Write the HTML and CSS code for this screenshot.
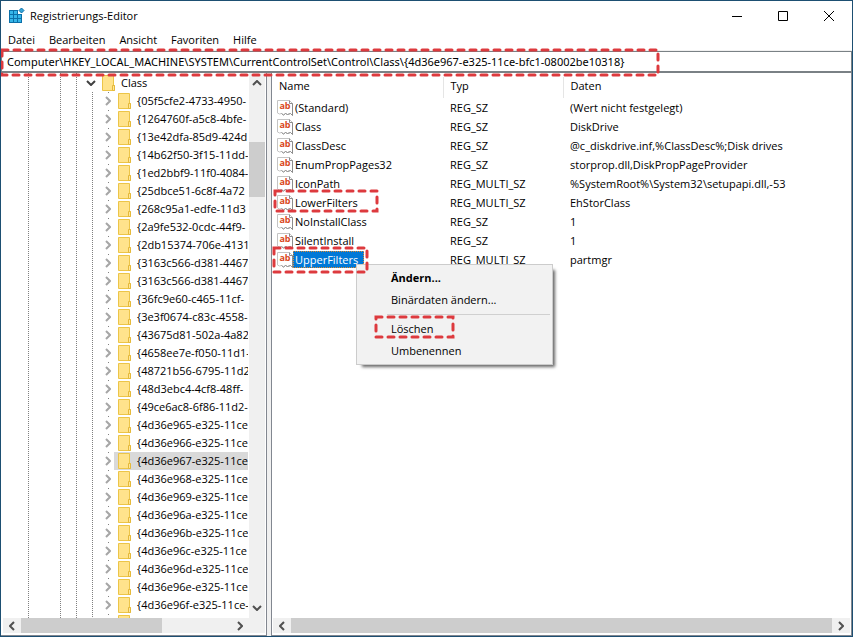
FILE: index.html
```
<!DOCTYPE html>
<html lang="de">
<head>
  <meta charset="utf-8">
  <title>Registrierungs-Editor</title>
  <link rel="stylesheet" href="styles.css">
</head>
<body>
  <svg class="sprite" aria-hidden="true">
    <symbol id="folder" viewBox="0 0 14 16">
      <path d="M.5 .5h11v10h1v5H.5z" fill="#ffe38c" stroke="#ecc548"/>
      <path d="M10.500 15.500v-5h2v5z" fill="#ffe79a" stroke="#e5b93a"/>
    </symbol>
    <symbol id="right" viewBox="0 0 6 10"><path d="M1 1l4 4-4 4" fill="none" stroke="currentColor" stroke-width="2"/></symbol>
    <symbol id="left" viewBox="0 0 6 10"><path d="M5 1L1 5l4 4" fill="none" stroke="currentColor" stroke-width="2"/></symbol>
    <symbol id="up" viewBox="0 0 10 6"><path d="M1 5l4-4 4 4" fill="none" stroke="currentColor" stroke-width="2"/></symbol>
    <symbol id="down" viewBox="0 0 10 6"><path d="M1 1l4 4 4-4" fill="none" stroke="currentColor" stroke-width="2"/></symbol>
    <symbol id="page" viewBox="0 0 16 16">
      <path d="M.5 .5h12l3 3v12l-2-2-3 1-2-1-2 1.500-2-1.500-2 .5-2-1z" fill="#fff" stroke="#c4c4c4"/>
      <path d="M12.500 .5v3h3v12l-2-2-3 1-2-1-2 1.500-2-1.500" fill="none" stroke="#8c8c8c"/>
    </symbol>
  </svg>

  <div class="window">
    <header class="titlebar">
      <svg class="logo" viewBox="0 0 16 16">
        <path d="M0 2h9v4h4v9H0z" fill="#0b6fa8"/>
        <path d="M1 3h3v3H1zM5 3h3v3H5zM1 7h3v3H1zM5 7h3v3H5zM9 7h3v3H9zM1 11h3v3H1zM5 11h3v3H5zM9 11h3v3H9z" fill="#35b5e8"/>
        <path d="M12.500 0l2.500 2.500-2.500 2.500L10 2.500z" fill="#35a5d8" stroke="#0b6fa8"/>
      </svg>
      <span class="title">Registrierungs-Editor</span>
      <button class="win-btn" aria-label="Minimieren"><svg viewBox="0 0 12 12"><path d="M1 6.500h10"/></svg></button>
      <button class="win-btn" aria-label="Maximieren"><svg viewBox="0 0 12 12"><path d="M1.500 1.500h9v9h-9z"/></svg></button>
      <button class="win-btn" aria-label="Schließen"><svg viewBox="0 0 12 12"><path d="M1 1l10 10M11 1L1 11"/></svg></button>
    </header>

    <nav class="menubar">
      <a href="#">Datei</a>
      <a href="#">Bearbeiten</a>
      <a href="#">Ansicht</a>
      <a href="#">Favoriten</a>
      <a href="#">Hilfe</a>
    </nav>

    <input class="address" type="text" aria-label="Pfad" value="Computer\HKEY_LOCAL_MACHINE\SYSTEM\CurrentControlSet\Control\Class\{4d36e967-e325-11ce-bfc1-08002be10318}">

    <main class="panes">
      <section class="pane tree-pane">
        <div class="tree-area">
          <div class="tree">
            <div class="guides"><i></i><i></i><i></i></div>
            <div class="branch">
              <div class="root"><svg class="open"><use href="#down"/></svg><svg class="folder"><use href="#folder"/></svg><span>Class</span></div>
              <ul class="keys" id="keys"></ul>
            </div>
          </div>
          <div class="scroll vertical">
            <button aria-label="Nach oben"><svg class="v"><use href="#up"/></svg></button>
            <div class="track"><div class="thumb"></div></div>
            <button aria-label="Nach unten"><svg class="v"><use href="#down"/></svg></button>
          </div>
        </div>
        <div class="scroll horizontal tree-scroll">
          <button aria-label="Nach links"><svg class="h"><use href="#left"/></svg></button>
          <div class="track"><div class="thumb"></div></div>
          <button aria-label="Nach rechts"><svg class="h"><use href="#right"/></svg></button>
        </div>
      </section>

      <section class="pane list-pane">
        <div class="list-area">
          <table class="values">
            <thead>
              <tr><th class="col-name">Name</th><th class="col-type">Typ</th><th>Daten</th></tr>
            </thead>
            <tbody id="values"></tbody>
          </table>
        </div>
        <div class="scroll horizontal">
          <button aria-label="Nach links"><svg class="h"><use href="#left"/></svg></button>
          <div class="track"><div class="thumb"></div></div>
          <button aria-label="Nach rechts"><svg class="h"><use href="#right"/></svg></button>
        </div>
      </section>
    </main>

    <div class="context-menu">
      <button class="default">Ändern...</button>
      <button>Binärdaten ändern...</button>
      <hr>
      <button>Löschen</button>
      <button>Umbenennen</button>
    </div>

    <svg class="mark mark-path"><rect/></svg>
    <svg class="mark mark-lower"><rect/></svg>
    <svg class="mark mark-upper"><rect/></svg>
    <svg class="mark mark-delete"><rect/></svg>
  </div>

  <script src="script.js"></script>
</body>
</html>
```

FILE: styles.css
```
* {
  box-sizing: border-box;
}
body {
  margin: 0;
  font-family: "Open Sans", "Noto Sans", sans-serif;
  font-size: 11px;
  color: #000;
}
button {
  padding: 0;
  border: none;
  background: none;
  font: inherit;
  color: inherit;
}
.sprite {
  display: none;
}
.window {
  position: relative;
  display: flex;
  flex-direction: column;
  height: 100vh;
  border: 1px solid #1d4f72;
  background: #fff;
  overflow: hidden;
}

/* title bar and menu */
.titlebar {
  display: flex;
  align-items: center;
  height: 30px;
  padding-left: 8px;
}
.logo {
  width: 16px;
  height: 16px;
}
.title {
  flex: 1;
  padding: 0 0 2px 5px;
}
.win-btn {
  display: flex;
  align-items: center;
  justify-content: center;
  width: 46px;
  height: 30px;
}
.win-btn svg {
  width: 12px;
  height: 12px;
  fill: none;
  stroke: #000;
}
.menubar {
  display: flex;
  align-items: center;
  gap: 14px;
  height: 20px;
  padding: 0 0 2px 7px;
  border-bottom: 1px solid #f0f0f0;
}
.menubar a {
  color: #000;
  text-decoration: none;
}
.address {
  height: 22px;
  padding: 0 5px;
  border: 1px solid #7a8185;
  border-bottom-width: 2px;
  font-family: "Noto Sans", sans-serif;
  font-size: 11px;
  color: #000;
  outline: none;
}

/* panes */
.panes {
  display: flex;
  flex: 1;
  gap: 4px;
  min-height: 0;
  background: #f0f0f0;
}
.pane {
  display: flex;
  flex-direction: column;
  padding: 0 1px 2px;
  border: 1px solid #828790;
  border-top: none;
  background: #fff;
}
.tree-pane {
  width: 266px;
  border-left: none;
}
.list-pane {
  flex: 1;
}
.tree-area {
  display: flex;
  flex: 1;
  min-height: 0;
}
.tree {
  display: flex;
  flex: 1;
  min-width: 0;
  margin-right: 1px;
  overflow: hidden;
}
.guides {
  display: flex;
  flex: none;
  width: 84px;
  padding-left: 26px;
}
.guides i,
.keys {
  background: repeating-linear-gradient(#808080 0 1px, transparent 1px 2px) 0 0 / 1px 100% no-repeat;
}
.guides i {
  flex: none;
  width: 16px;
}
.guides i:first-child {
  width: 32px;
}
.guides i:last-child {
  width: 10px;
}
.branch {
  flex: 1;
  min-width: 0;
  padding-top: 1px;
}
.root,
.keys li {
  display: flex;
  align-items: center;
  height: 18px;
  white-space: nowrap;
}
.keys li {
  background: linear-gradient(#808080, #808080) 3px 0 / 1px 1px no-repeat;
}
.root span,
.keys span {
  padding: 0 0 2px 5px;
}
.open {
  width: 10px;
  height: 6px;
  margin-right: 6px;
  color: #404040;
}
.keys {
  margin: 0 0 0 6px;
  padding: 0 0 0 13px;
  list-style: none;
}
.toggle {
  flex: none;
  width: 6px;
  height: 10px;
  color: #a6a6a6;
}
.folder {
  flex: none;
  width: 14px;
  height: 16px;
}
.entry {
  display: flex;
  flex: 1;
  align-items: center;
  min-width: 0;
  height: 18px;
  margin-left: 3px;
  padding-left: 4px;
}
.selected .entry {
  background: #d9d9d9;
}

/* scrollbars */
.scroll {
  display: flex;
  background: #f0f0f0;
  color: #505050;
}
.scroll button {
  display: flex;
  align-items: center;
  justify-content: center;
}
.scroll .track {
  display: flex;
  flex: 1;
}
.scroll .thumb {
  background: #cdcdcd;
}
.vertical {
  flex-direction: column;
  width: 16px;
}
.vertical button {
  height: 20px;
}
.vertical .track {
  flex-direction: column;
  padding-top: 49px;
}
.vertical .thumb {
  height: 55px;
}
.horizontal {
  height: 15px;
}
.horizontal button {
  width: 18px;
}
.horizontal .thumb {
  width: 100%;
}
.tree-scroll {
  margin-left: 1px;
  padding-right: 16px;
}
.tree-scroll .thumb {
  width: 67%;
}
.v {
  width: 10px;
  height: 6px;
}
.h {
  width: 6px;
  height: 10px;
}

/* value list */
.list-area {
  flex: 1;
  min-height: 0;
  padding-top: 4px;
  overflow: hidden;
}
.values {
  width: 100%;
  border-collapse: collapse;
  table-layout: fixed;
}
.values th {
  height: 21px;
  padding: 0 7px 4px;
  border-left: 1px solid #e5e5e5;
  font-weight: normal;
  text-align: left;
}
.values .col-name {
  width: 170px;
  padding-left: 6px;
  border-left: none;
}
.col-type {
  width: 120px;
}
.values td {
  height: 19px;
  padding: 0 7px;
  white-space: nowrap;
}
.values td:first-child {
  padding-left: 4px;
}
.value {
  display: flex;
  align-items: center;
}
.icon {
  display: grid;
  width: 16px;
  height: 16px;
}
.icon svg,
.icon b {
  grid-area: 1 / 1;
  width: 16px;
  height: 16px;
}
.icon b {
  color: #d9481c;
  font-size: 9px;
  line-height: 12px;
  text-align: center;
}
.value span {
  padding: 1px 6px 1px 2px;
}
.active span {
  background: #0078d7;
  color: #fff;
  outline: 1px dotted #e08a30;
  outline-offset: -1px;
}

/* context menu */
.context-menu {
  position: absolute;
  left: 355px;
  top: 263px;
  width: 197px;
  padding: 2px;
  border: 1px solid #ccc;
  background: #f2f2f2;
  box-shadow: 4px 4px 3px -2px rgba(0, 0, 0, 0.6);
}
.context-menu button {
  display: block;
  width: 100%;
  height: 22px;
  padding: 0 0 2px 32px;
  text-align: left;
}
.context-menu .default {
  font-weight: bold;
}
.context-menu hr {
  margin: 3px 0 3px 28px;
  border: none;
  border-top: 1px solid #d0d0d0;
}

/* highlight frames */
.mark {
  position: absolute;
  overflow: visible;
  pointer-events: none;
}
.mark rect {
  width: 100%;
  height: 100%;
  fill: none;
  stroke: #dd3a3e;
  stroke-width: 3px;
  stroke-dasharray: 6 6;
  stroke-linecap: round;
}
.mark-path {
  left: 1px;
  top: 49px;
  width: 656px;
  height: 25px;
}
.mark-lower {
  left: 274px;
  top: 190px;
  width: 102px;
  height: 20px;
}
.mark-upper {
  left: 273px;
  top: 247px;
  width: 93px;
  height: 24px;
}
.mark-delete {
  left: 375px;
  top: 316px;
  width: 77px;
  height: 20px;
}
```

FILE: script.js
```
const keys = [
  '{05f5cfe2-4733-4950-', '{1264760f-a5c8-4bfe-', '{13e42dfa-85d9-424d', '{14b62f50-3f15-11dd-',
  '{1ed2bbf9-11f0-4084-', '{25dbce51-6c8f-4a72', '{268c95a1-edfe-11d3', '{2a9fe532-0cdc-44f9-',
  '{2db15374-706e-4131', '{3163c566-d381-4467', '{3163c566-d381-4467', '{36fc9e60-c465-11cf-',
  '{3e3f0674-c83c-4558-', '{43675d81-502a-4a82', '{4658ee7e-f050-11d1-', '{48721b56-6795-11d2',
  '{48d3ebc4-4cf8-48ff-', '{49ce6ac8-6f86-11d2-', '{4d36e965-e325-11ce', '{4d36e966-e325-11ce',
  '{4d36e967-e325-11ce', '{4d36e968-e325-11ce', '{4d36e969-e325-11ce', '{4d36e96a-e325-11ce',
  '{4d36e96b-e325-11ce', '{4d36e96c-e325-11ce', '{4d36e96d-e325-11ce', '{4d36e96e-e325-11ce',
  '{4d36e96f-e325-11ce-', ''
];

document.getElementById('keys').innerHTML = keys.map(key => `
  <li class="${key.startsWith('{4d36e967') ? 'selected' : ''}">
    <svg class="toggle"><use href="#right"/></svg>
    <div class="entry"><svg class="folder"><use href="#folder"/></svg><span>${key}</span></div>
  </li>`).join('');

const values = [
  ['(Standard)', 'REG_SZ', '(Wert nicht festgelegt)'],
  ['Class', 'REG_SZ', 'DiskDrive'],
  ['ClassDesc', 'REG_SZ', '@c_diskdrive.inf,%ClassDesc%;Disk drives'],
  ['EnumPropPages32', 'REG_SZ', 'storprop.dll,DiskPropPageProvider'],
  ['IconPath', 'REG_MULTI_SZ', '%SystemRoot%\\System32\\setupapi.dll,-53'],
  ['LowerFilters', 'REG_MULTI_SZ', 'EhStorClass'],
  ['NoInstallClass', 'REG_SZ', '1'],
  ['SilentInstall', 'REG_SZ', '1'],
  ['UpperFilters', 'REG_MULTI_SZ', 'partmgr']
];

document.getElementById('values').innerHTML = values.map(([name, type, data]) => `
  <tr>
    <td><div class="value ${name === 'UpperFilters' ? 'active' : ''}">
      <div class="icon"><svg><use href="#page"/></svg><b>ab</b></div><span>${name}</span>
    </div></td>
    <td>${type}</td>
    <td>${data}</td>
  </tr>`).join('');
```
